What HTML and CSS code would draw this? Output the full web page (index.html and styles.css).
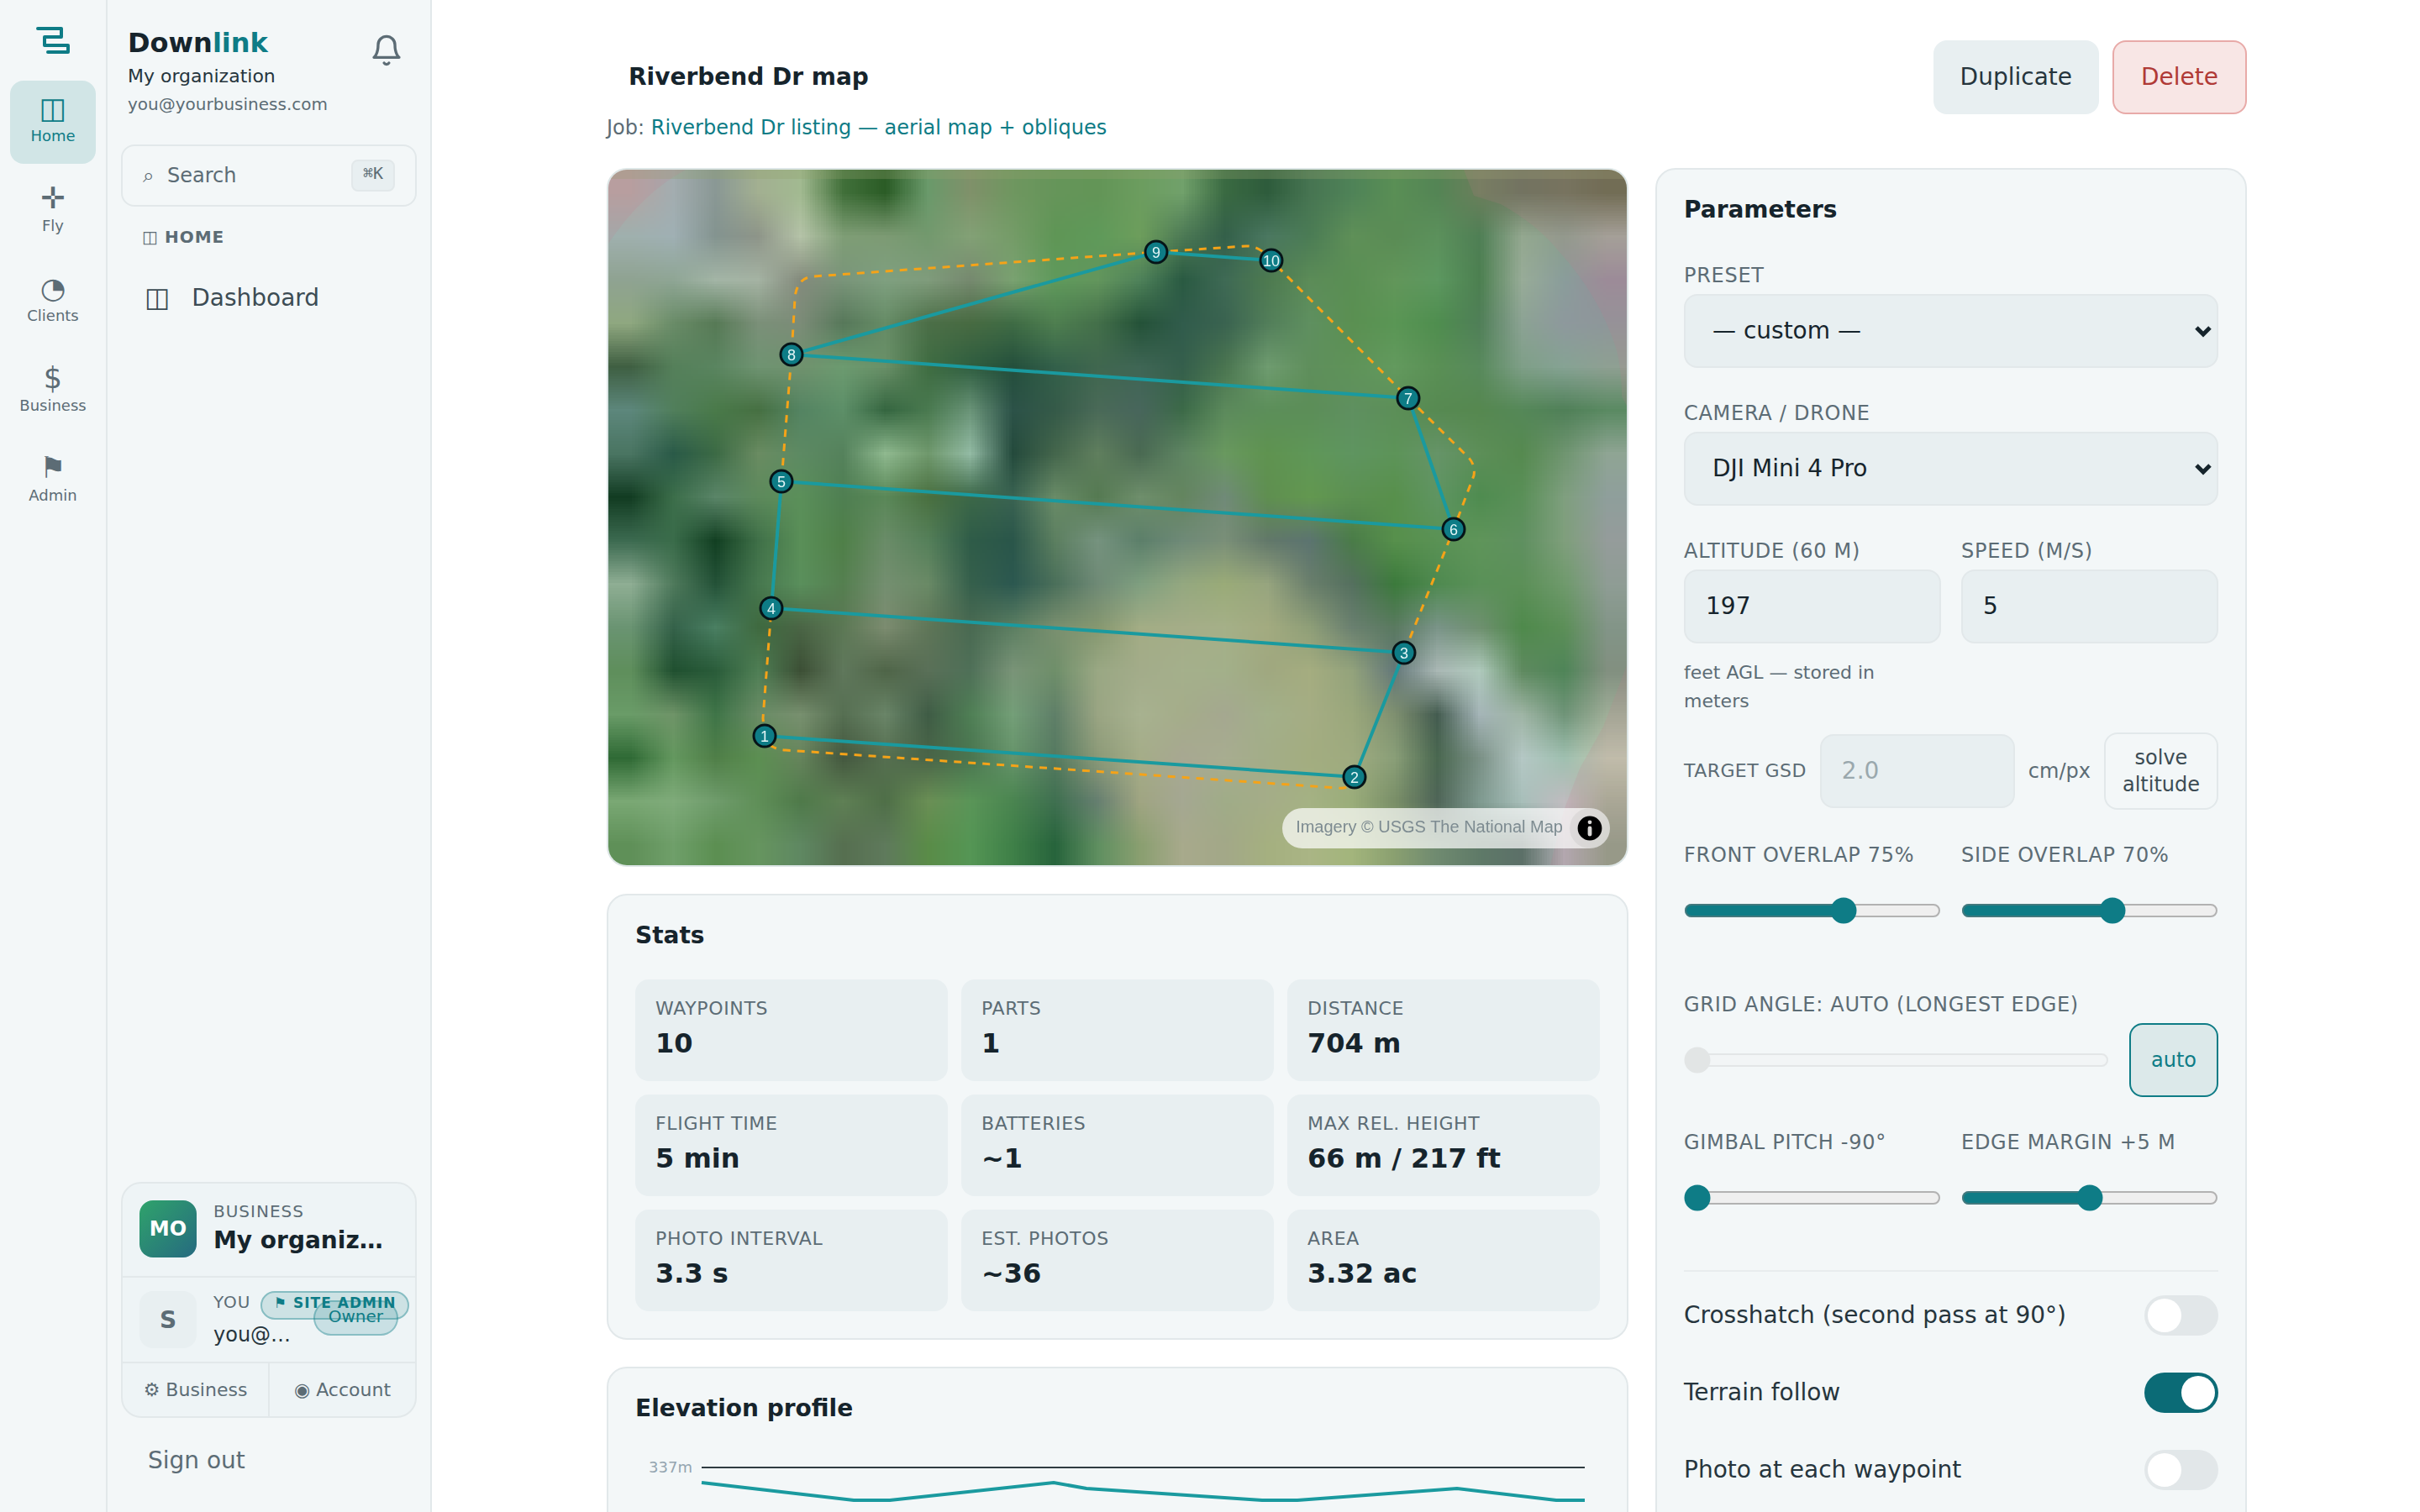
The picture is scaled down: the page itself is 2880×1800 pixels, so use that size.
FILE: index.html
```html
<!DOCTYPE html>
<html lang="en">
<head>
    <meta charset="UTF-8">
    <meta name="viewport" content="width=device-width, initial-scale=1.0">
    <title>Riverbend Dr map - Downlink</title>
    <link rel="stylesheet" href="styles.css">
</head>
<body>

    <nav class="rail">
        <a href="#" class="rail-logo" aria-label="Downlink">
            <svg width="40" height="32" viewBox="0 0 40 32" fill="none" stroke="currentColor" stroke-width="4" stroke-linecap="round" stroke-linejoin="round">
                <path d="M2 2H30V12H10V22H38V30H14"/>
            </svg>
        </a>
        <a href="#" class="rail-item active"><span class="rail-icon">◫</span>Home</a>
        <a href="#" class="rail-item"><span class="rail-icon">✛</span>Fly</a>
        <a href="#" class="rail-item"><span class="rail-icon">◔</span>Clients</a>
        <a href="#" class="rail-item"><span class="rail-icon">$</span>Business</a>
        <a href="#" class="rail-item"><span class="rail-icon">⚑</span>Admin</a>
    </nav>

    <aside class="sidebar">
        <div class="brand">
            <div>
                <div class="brand-name">Down<span>link</span></div>
                <div class="brand-org">My organization</div>
                <div class="brand-email">you@yourbusiness.com</div>
            </div>
            <button class="bell" aria-label="Notifications">
                <svg width="40" height="40" viewBox="0 0 24 24" fill="none" stroke="currentColor" stroke-width="2" stroke-linecap="round" stroke-linejoin="round">
                    <path d="M18 8A6 6 0 0 0 6 8c0 7-3 9-3 9h18s-3-2-3-9"/>
                    <path d="M13.73 21a2 2 0 0 1-3.46 0"/>
                </svg>
            </button>
        </div>

        <button class="search"><span class="search-icon">⌕</span>Search<kbd>⌘K</kbd></button>

        <div class="section-title"><span>◫</span>HOME</div>
        <a href="#" class="side-link"><span>◫</span>Dashboard</a>

        <div class="account">
            <div class="account-row">
                <div class="avatar avatar-org">MO</div>
                <div class="account-text">
                    <div class="account-label">BUSINESS</div>
                    <div class="account-org">My organiz…</div>
                </div>
            </div>
            <div class="account-row account-you">
                <div class="avatar">S</div>
                <div class="account-text">
                    <div class="account-label">YOU <span class="badge">⚑ SITE ADMIN</span></div>
                    <div class="account-email">you@…</div>
                </div>
                <span class="role">Owner</span>
            </div>
            <div class="account-links">
                <a href="#">⚙ Business</a>
                <a href="#">◉ Account</a>
            </div>
        </div>
        <button class="signout">Sign out</button>
    </aside>

    <main>
        <div class="container">
            <header>
                <input type="text" class="title-input" aria-label="Map name" value="Riverbend Dr map">
                <button class="btn">Duplicate</button>
                <button class="btn btn-danger">Delete</button>
            </header>
            <p class="job">Job: <a href="#">Riverbend Dr listing — aerial map + obliques</a></p>

            <div class="columns">
                <div class="column">
                    <div class="map">
                        <canvas id="imagery" class="map-layer"></canvas>
                        <svg class="map-layer" viewBox="0 0 1212 828" preserveAspectRatio="xMidYMid slice">
                            <rect width="1212" height="11" fill="#93a36e" opacity="0.3"/>
                            <!-- outside of the flight radius -->
                            <g fill="#c8788c" opacity="0.15">
                                <path d="M0 0H92Q40 28 0 88Z"/>
                                <path d="M1018 0L1030 31L1062 41Q1105 65 1130 96Q1180 150 1200 215Q1206 240 1206 270L1212 281V0Z"/>
                                <path d="M1212 590L1184 663L1156 713L1137 763L1121 828H1212Z"/>
                            </g>
                            <path class="boundary" d="M186 674L184 653L194 522L206 371L218 220L222 153Q224 128 245 127L652 98L759 91Q775 90 789 108L952 272L1024 343Q1032 352 1030 364L1006 428L947 575L888 723Q886 738 868 736L211 691Q190 690 186 674"/>
                            <path class="route" d="M186 674L888 723L947 575L194 522L206 371L1006 428L952 272L218 220L652 98L789 108"/>
                            <g class="points" id="points"></g>
                        </svg>
                        <div class="attribution">
                            <span>Imagery © USGS The National Map</span>
                            <button aria-label="Toggle attribution">
                                <svg width="48" height="48" viewBox="0 0 20 20" fill-rule="evenodd"><path d="M4 10a6 6 0 1 0 12 0 6 6 0 1 0-12 0m5-3a1 1 0 1 0 2 0 1 1 0 1 0-2 0m0 3a1 1 0 1 1 2 0v3a1 1 0 1 1-2 0"/></svg>
                            </button>
                        </div>
                    </div>

                    <section class="card">
                        <h2>Stats</h2>
                        <div class="stats">
                            <div class="stat"><span>WAYPOINTS</span><strong>10</strong></div>
                            <div class="stat"><span>PARTS</span><strong>1</strong></div>
                            <div class="stat"><span>DISTANCE</span><strong>704 m</strong></div>
                            <div class="stat"><span>FLIGHT TIME</span><strong>5 min</strong></div>
                            <div class="stat"><span>BATTERIES</span><strong>~1</strong></div>
                            <div class="stat"><span>MAX REL. HEIGHT</span><strong>66 m / 217 ft</strong></div>
                            <div class="stat"><span>PHOTO INTERVAL</span><strong>3.3 s</strong></div>
                            <div class="stat"><span>EST. PHOTOS</span><strong>~36</strong></div>
                            <div class="stat"><span>AREA</span><strong>3.32 ac</strong></div>
                        </div>
                    </section>

                    <section class="card">
                        <h2>Elevation profile</h2>
                        <svg class="chart" viewBox="0 0 1148 280">
                            <text x="68" y="24" text-anchor="end">337m</text>
                            <path d="M79 18H1130" stroke="#2f3c42" stroke-width="2"/>
                            <path d="M79 36L260 57H303L498 36L537 43L746 57H788L978 43L1096 57H1130" stroke="#1a9a9f" stroke-width="4"/>
                        </svg>
                    </section>
                </div>

                <section class="card params">
                    <h2>Parameters</h2>

                    <div class="field">
                        <label for="preset">PRESET</label>
                        <div class="select">
                            <select id="preset"><option>— custom —</option></select>
                            <svg width="20" height="14" viewBox="0 0 20 14" fill="none" stroke="currentColor" stroke-width="5"><path d="M2 2L10 10L18 2"/></svg>
                        </div>
                    </div>
                    <div class="field">
                        <label for="camera">CAMERA / DRONE</label>
                        <div class="select">
                            <select id="camera"><option>DJI Mini 4 Pro</option></select>
                            <svg width="20" height="14" viewBox="0 0 20 14" fill="none" stroke="currentColor" stroke-width="5"><path d="M2 2L10 10L18 2"/></svg>
                        </div>
                    </div>

                    <div class="pair">
                        <div>
                            <label for="altitude">ALTITUDE (60 M)</label>
                            <input type="text" id="altitude" value="197">
                            <p class="hint">feet AGL — stored in meters</p>
                        </div>
                        <div>
                            <label for="speed">SPEED (M/S)</label>
                            <input type="text" id="speed" value="5">
                        </div>
                    </div>

                    <div class="gsd field">
                        <label for="gsd">TARGET GSD</label>
                        <input type="text" id="gsd" placeholder="2.0">
                        <span>cm/px</span>
                        <button>solve altitude</button>
                    </div>

                    <div class="pair field">
                        <div>
                            <label for="front">FRONT OVERLAP 75%</label>
                            <div class="slider"><input type="range" id="front" min="40" max="95" value="75"></div>
                        </div>
                        <div>
                            <label for="side">SIDE OVERLAP 70%</label>
                            <div class="slider"><input type="range" id="side" min="40" max="90" value="70"></div>
                        </div>
                    </div>

                    <div class="field angle">
                        <label for="angle">GRID ANGLE: AUTO (LONGEST EDGE)</label>
                        <div class="angle-row">
                            <div class="slider"><input type="range" id="angle" min="0" max="180" value="0" disabled></div>
                            <button class="auto">auto</button>
                        </div>
                    </div>

                    <div class="pair">
                        <div>
                            <label for="pitch">GIMBAL PITCH -90°</label>
                            <div class="slider"><input type="range" id="pitch" min="-90" max="0" value="-90"></div>
                        </div>
                        <div>
                            <label for="margin">EDGE MARGIN +5 M</label>
                            <div class="slider"><input type="range" id="margin" min="-20" max="30" value="5"></div>
                        </div>
                    </div>

                    <div class="toggles">
                        <div class="toggle"><label for="crosshatch">Crosshatch (second pass at 90°)</label><input type="checkbox" id="crosshatch"></div>
                        <div class="toggle"><label for="terrain">Terrain follow</label><input type="checkbox" id="terrain" checked></div>
                        <div class="toggle"><label for="photo">Photo at each waypoint</label><input type="checkbox" id="photo"></div>
                    </div>
                </section>
            </div>
        </div>
    </main>

    <script src="map.js"></script>
</body>
</html>
```

FILE: styles.css
```css
* {
    box-sizing: border-box;
}
body {
    margin: 0;
    height: 100vh;
    overflow: hidden;
    display: flex;
    font-family: "DejaVu Sans", sans-serif;
    font-size: 28px;
    color: #26353d;
    background-color: #ffffff;
}
a {
    color: inherit;
    text-decoration: none;
}
button, input, select {
    font-family: inherit;
    color: inherit;
}
button {
    cursor: pointer;
}
p, h2 {
    margin: 0;
}

/* Icon rail */
.rail {
    width: 128px;
    flex-shrink: 0;
    padding: 32px 12px;
    background-color: #f3f7f8;
    border-right: 2px solid #e2e8ea;
    display: flex;
    flex-direction: column;
    gap: 8px;
}
.rail-logo {
    height: 56px;
    display: flex;
    justify-content: center;
    color: #0e7c86;
}
.rail-logo svg {
    display: block;
}
.rail-item {
    height: 99px;
    padding-top: 12px;
    border-radius: 16px;
    display: flex;
    flex-direction: column;
    align-items: center;
    font-size: 18px;
    line-height: 24px;
    color: #5c6c75;
}
.rail-item.active {
    background-color: #d1e5e6;
    color: #0e7c86;
}
.rail-icon {
    font-size: 35px;
    line-height: 42px;
    height: 42px;
}

/* Sidebar */
.sidebar {
    width: 386px;
    flex-shrink: 0;
    padding: 30px 16px 18px;
    background-color: #f3f7f8;
    border-right: 2px solid #e2e8ea;
    display: flex;
    flex-direction: column;
}
.brand {
    display: flex;
    justify-content: space-between;
    align-items: flex-start;
    padding: 0 16px 0 8px;
    margin-bottom: 34px;
}
.brand-name {
    font-size: 32px;
    font-weight: bold;
    line-height: 42px;
    color: #16242c;
}
.brand-name span {
    color: #0e7c86;
}
.brand-org {
    font-size: 22px;
    line-height: 38px;
}
.brand-email {
    font-size: 20px;
    line-height: 28px;
    color: #5c6c75;
}
.bell {
    margin-top: 10px;
    padding: 0;
    border: none;
    background: none;
    color: #5c6c75;
}
.bell svg {
    display: block;
}
.search {
    height: 74px;
    padding: 0 24px;
    border: 2px solid #e2e8ea;
    border-radius: 16px;
    background: none;
    display: flex;
    align-items: center;
    font-size: 24px;
    color: #5c6c75;
}
.search-icon {
    width: 29px;
    text-align: left;
}
.search kbd {
    margin-left: auto;
    height: 38px;
    padding: 0 12px;
    border: 2px solid #e2e8ea;
    border-radius: 8px;
    background-color: #e8eff1;
    font-family: "DejaVu Sans Mono", monospace;
    font-size: 20px;
    line-height: 28px;
}
.section-title {
    display: flex;
    gap: 7px;
    margin-top: 22px;
    padding-left: 25px;
    font-size: 20px;
    line-height: 28px;
    font-weight: bold;
    letter-spacing: 1px;
    color: #5c6c75;
}
.section-title span {
    font-weight: normal;
}
.side-link {
    display: flex;
    align-items: center;
    gap: 26px;
    height: 88px;
    margin-top: 14px;
    padding-left: 28px;
    color: #3c4c54;
}
.side-link span {
    font-size: 32px;
}

.account {
    margin-top: auto;
    margin-bottom: 6px;
    border: 2px solid #e2e8ea;
    border-radius: 24px;
    background-color: #eef4f6;
}
.account-row {
    height: 112px;
    padding: 20px;
    border-bottom: 2px solid #e2e8ea;
    display: flex;
    gap: 20px;
}
.account-you {
    height: 102px;
    padding: 16px 20px;
    gap: 16px;
}
.account-you .account-text {
    margin-left: 4px;
}
.avatar {
    width: 68px;
    height: 68px;
    flex-shrink: 0;
    border-radius: 16px;
    background-color: #e8eff1;
    color: #5c6c75;
    display: flex;
    align-items: center;
    justify-content: center;
    font-weight: bold;
}
.avatar-org {
    font-size: 24px;
    color: #ffffff;
    background: linear-gradient(135deg, #2fa36b, #266a80);
}
.account-text {
    flex: 1;
    min-width: 0;
}
.account-label {
    font-size: 20px;
    line-height: 26px;
    letter-spacing: 1px;
    white-space: nowrap;
    color: #5c6c75;
}
.account-org {
    white-space: nowrap;
    font-size: 28px;
    line-height: 44px;
    font-weight: bold;
    color: #16242c;
}
.account-email {
    white-space: nowrap;
    font-size: 24px;
    line-height: 36px;
    color: #26353d;
}
.badge {
    display: inline-block;
    height: 34px;
    margin-left: 4px;
    padding: 0 14px;
    border: 2px solid #86bdc2;
    border-radius: 17px;
    background-color: #cde2e4;
    font-size: 17px;
    line-height: 24px;
    font-weight: bold;
    vertical-align: top;
    color: #0e7c86;
}
.role {
    align-self: center;
    height: 42px;
    margin-bottom: 4px;
    padding: 0 16px;
    border: 2px solid rgba(14, 124, 134, 0.35);
    border-radius: 21px;
    background-color: rgba(14, 124, 134, 0.16);
    font-size: 20px;
    line-height: 34px;
    color: #0e7c86;
}
.account-links {
    display: flex;
    font-size: 22px;
    line-height: 63px;
    text-align: center;
    color: #5c6c75;
}
.account-links a {
    flex: 1;
}
.account-links a + a {
    border-left: 2px solid #e2e8ea;
}
.signout {
    height: 88px;
    padding: 0 32px;
    border: none;
    background: none;
    font-size: 28px;
    text-align: left;
    color: #5c6c75;
}

/* Page */
main {
    flex: 1;
    min-width: 0;
    overflow: hidden;
    padding: 48px 64px 48px 66px;
}
.container {
    max-width: 1952px;
    margin: 0 auto;
}
header {
    display: flex;
    gap: 16px;
}
.title-input {
    flex: 1;
    min-width: 0;
    height: 88px;
    padding: 0 24px 2px;
    border: 2px solid transparent;
    background: none;
    font-size: 28px;
    font-weight: bold;
    color: #16242c;
}
.btn {
    height: 88px;
    padding: 0 32px 2px;
    border: none;
    border-radius: 16px;
    background-color: #e8eff1;
    font-size: 28px;
}
.btn-danger {
    border: 2px solid #e8aaa8;
    background-color: #f8e6e5;
    color: #b03a36;
}
.job {
    margin-top: 2px;
    margin-bottom: 34px;
    font-size: 24px;
    line-height: 28px;
    color: #5c6c75;
}
.job a {
    color: #0e7c86;
}
.columns {
    display: grid;
    grid-template-columns: minmax(0, 1fr) 704px;
    align-items: start;
    gap: 32px;
}
.column {
    display: flex;
    flex-direction: column;
    gap: 32px;
    min-width: 0;
}
.card {
    padding: 32px;
    border: 2px solid #e2e8ea;
    border-radius: 24px;
    background-color: #f3f7f8;
}
.card h2 {
    margin-bottom: 36px;
    font-size: 28px;
    line-height: 32px;
    color: #16242c;
}

/* Map */
.map {
    position: relative;
    height: 832px;
    border: 2px solid #dde6e6;
    border-radius: 24px;
    overflow: hidden;
}
.map-layer {
    position: absolute;
    top: 0;
    left: 0;
    width: 100%;
    height: 100%;
}
.boundary {
    fill: none;
    stroke: #f5a318;
    stroke-width: 3;
    stroke-dasharray: 9 8;
}
.route {
    fill: none;
    stroke: #1a9a9f;
    stroke-width: 4;
}
.points circle {
    fill: #0e7c86;
    stroke: #061418;
    stroke-width: 3;
}
.points text {
    font-family: "Liberation Sans", sans-serif;
    font-size: 18px;
    text-anchor: middle;
    fill: #e4f6f7;
}
.attribution {
    position: absolute;
    right: 20px;
    bottom: 20px;
    display: flex;
    gap: 8px;
    padding-left: 16px;
    border-radius: 24px;
    background-color: rgba(255, 255, 255, 0.7);
    font-family: "Liberation Sans", sans-serif;
    font-size: 20px;
    line-height: 44px;
    color: #7d8b91;
}
.attribution button {
    width: 48px;
    height: 48px;
    padding: 0;
    border: none;
    border-radius: 24px;
    background-color: rgba(0, 0, 0, 0.05);
    color: #000000;
}
.attribution svg {
    display: block;
}

/* Stats */
.stats {
    display: grid;
    grid-template-columns: repeat(3, minmax(0, 1fr));
    gap: 16px;
}
.stat {
    padding: 20px 24px 21px;
    border-radius: 16px;
    background-color: #e8eff1;
}
.stat span {
    display: block;
    font-size: 22px;
    line-height: 30px;
    letter-spacing: 0.03em;
    color: #5c6c75;
}
.stat strong {
    display: block;
    margin-top: 2px;
    font-size: 32px;
    line-height: 48px;
    color: #16242c;
}
.chart {
    display: block;
    width: 100%;
    fill: none;
}
.chart text {
    font-size: 18px;
    fill: #94a5b0;
}

/* Parameters */
.params h2 {
    margin-bottom: 44px;
}
.params label {
    display: block;
    font-size: 24px;
    line-height: 36px;
    letter-spacing: 0.03em;
    color: #5c6c75;
}
.field {
    margin-bottom: 36px;
}
.pair {
    display: grid;
    grid-template-columns: 1fr 1fr;
    gap: 24px;
}
.params input[type="text"], .params select {
    display: block;
    width: 100%;
    height: 88px;
    margin-top: 4px;
    padding: 0 24px 2px;
    border: 2px solid #e2e8ea;
    border-radius: 16px;
    background-color: #e8eff1;
    font-size: 28px;
    color: #16242c;
}
.params select {
    appearance: none;
    padding: 0 32px 2px;
}
.params input::placeholder {
    color: #9aa8ad;
}
.select {
    position: relative;
    color: #16242c;
}
.select svg {
    position: absolute;
    right: 8px;
    top: 38px;
    pointer-events: none;
}
.hint {
    margin-top: 18px;
    margin-bottom: 20px;
    font-size: 22px;
    line-height: 34px;
    color: #5c6c75;
}
.gsd {
    display: flex;
    align-items: center;
    gap: 16px;
    font-size: 24px;
    color: #5c6c75;
}
.params .gsd label {
    flex-shrink: 0;
    font-size: 22px;
    letter-spacing: 0.02em;
}
.params .gsd input {
    flex: 1;
    min-width: 0;
    margin-top: 0;
}
.gsd button {
    width: min-content;
    height: 92px;
    padding: 0 20px;
    border: 2px solid #e2e8ea;
    border-radius: 16px;
    background: none;
    font-size: 24px;
    line-height: 32px;
    color: #3c4c54;
}
.slider {
    flex: 1;
    height: 88px;
    margin-top: 4px;
    display: flex;
    align-items: center;
}
.slider input {
    zoom: 2;
    width: 100%;
    margin: 0;
    accent-color: #0e7c86;
}
.slider input:disabled {
    opacity: 0.4;
}
.angle {
    margin-top: 50px;
}
.angle-row {
    display: flex;
    align-items: center;
    gap: 24px;
}
.angle-row .auto {
    height: 88px;
    margin-top: 4px;
    padding: 0 24px;
    border: 2px solid #0e7c86;
    border-radius: 16px;
    background-color: #dce9ea;
    font-size: 24px;
    color: #0e7c86;
}
.toggles {
    margin-top: 42px;
    padding-top: 6px;
    border-top: 2px solid #e8ecee;
}
.toggle {
    display: flex;
    align-items: center;
    justify-content: space-between;
    height: 92px;
}
.toggle label {
    font-size: 28px;
    letter-spacing: normal;
    color: #26353d;
}
.toggle input {
    appearance: none;
    width: 88px;
    height: 48px;
    margin: 0;
    padding: 4px;
    border-radius: 24px;
    background-color: #e2e7e9;
    display: flex;
}
.toggle input::before {
    content: "";
    width: 40px;
    height: 40px;
    border-radius: 50%;
    background-color: #ffffff;
}
.toggle input:checked {
    justify-content: flex-end;
    background-color: #0b6b76;
}
```

FILE: map.js
```js
// low resolution imagery, one colour per cell
const imagery = [
    'b5a5a3 a3adb0 8a9895 a3b091 a2ba91 41703a 2b5c26 6a9a6b 80916a 6f9760 66955a 639557 6c9d5f 71a16b 3a6a42 2e5c3c 477552 4f8358 5a8f55 548555 6b7f5c 64735a 6a7358 636b4c',
    '9fb0ae a0b0b4 849490 8e9589 b5c3a8 7f9e76 7d9b74 73996e 83a176 759c68 5f9656 5f9a5a 6d9e5c 4d7a55 34604a 4b7861 4b7c55 5f9058 5a8c55 5c915c 4f7f55 94a890 8a9f8e 9fa79a',
    '8fa392 8fa695 a3b5a6 a5b3a3 848b7d 7a957a 7fa080 809c7c 76896f 7aa271 5f9a5c 63965d 4f825a 2a5a42 3f6a55 4d7a50 5c8c58 5a8f54 62965a 5d9860 4c8050 98ac98 8a9d9b 958f9a',
    '8fa880 6a8c68 577a56 7b9079 7c8c78 57785a 668c66 4c6f48 486b42 3f6c45 4f7f50 44704a 245238 315c4c 3a6350 527e5a 5f9060 5b9052 5a9655 4f8e4f 507f58 8ca394 8e999d 8e979a',
    '3f5f42 55805a 5a8560 6f9472 70926e 6c9b70 6a9068 3f6d42 2f5e40 244f3c 33604a 40674f 3f6655 355f4c 4a7550 6f9c70 5f8f5c 5f9359 639a5e 5a9055 588a5c 7f9f88 86a394 8fa093',
    '5d877c 517f5c 4a7a4a 467042 548462 5d8f68 356640 4a7a50 6a9478 2c5248 355a48 4a6a58 48665c 3c6a48 5c8a5c 5c8f5a 5c8e58 5f9060 5c8f58 578a52 568850 558858 508058 5a8a62',
    '4a7562 2a5a48 3c6a45 6a8c62 5d8a63 55825c 8fb98f 6f986c 93bba4 244a3c 44664c 607f5e 4a6a52 5f8563 69995f 5f9350 5f9758 5f9560 5d9459 669468 5d8f58 568a50 6f9570 8fa594',
    '123c22 3c6e4a 5a8568 5d8a5c 5b905a 4f7f52 5a8858 4a7040 3c6848 3a6352 6a8c68 557a52 6f8f6c 64855f 708a78 5f8f50 639850 5c9052 58904c 5f9562 4f8c50 5a9058 7f9f7f 8f9f9c',
    '3c6a50 3a6c4a 123f22 3f7048 5a8f58 4f8048 6a8c68 55805a 2f5c48 2a564a 5c7f60 76937f 5c7f6a 6f8a78 7a8f78 62786a 5c7470 4a7c48 57904c 5a9255 5f955a 5f9060 7f9f7c 959c9b',
    '8fae94 4f7a5c 245238 47784f 5a8f5c 557f50 748f70 6a8a66 36604c 2c5850 4a6f5a 6f8a76 7f9f80 94a880 9aab78 97a57f 6a7f6c 55705f 3c7a3c 4f8a50 5a9158 5c9058 6f9a6c 8f9d95',
    '6a9472 35624a 4a7f62 3f6a40 4a6545 5c7855 7c8c70 5f7658 4a6a52 5c7f62 7a9070 869870 a3ad85 a5ad88 a5b088 a3ab80 8f9f78 6a8070 5a7a60 7a9488 6f9070 4f8a4c 5c8f58 839588',
    '5f8f5c 205030 2a5c3a 4f7f55 3c4f35 60785c 4f6548 5a7058 4f7058 7a9478 6f8f6a 9aa884 a3ac8a a5b08c a3b08a a0a880 a5ad80 93a37c 64787a aab8b5 b0cabd 5f8a60 4f8558 829080',
    '6a9c68 6f9468 3f7548 6a8c66 78906f 566f52 6a8568 3f5c45 4f7f55 749f78 5f7f68 9aa583 a8b290 a5ad8a a5a890 a3b08a a5ad84 9ba87c 7f9070 445c50 a5b5b8 9fb5a5 6f9478 9fae98',
    '2f6a35 64985f 507f48 5c8f52 66845c 44583f 566f50 4a6548 4a7550 66946a 557a60 8c9a78 a5ad88 a8a892 a8ad90 a3ad88 a3ad80 9fab80 8a9f78 4a6850 7a9085 b5c8c5 9fc0b0 c0c8b0',
    '7aa874 7fab7a 6f9c6c 5f8f58 4f7a4a 5f8055 4f6f48 6a8f55 5a9558 4a8550 3f7050 667f70 a0a582 a5a892 a0ac88 a5ad88 a5b284 9aad7a 7a8f68 4f6558 7f9a90 a8bfba c0bcc0 a5b098',
    '5f9058 6f9f6a 5c8f52 66955f 5f8862 566f50 5f7a5c 5a8c48 559655 3f8048 27643c 5f8f60 8a9f70 a8aa8c a3a888 a5b080 aab585 a3b57c 8aa070 6f8a70 5f7a68 5c7068 b0b0b5 8f9f88'
];

const canvas = document.getElementById('imagery');
canvas.width = 24;
canvas.height = imagery.length;
const ctx = canvas.getContext('2d');
imagery.forEach((row, y) => {
    row.split(' ').forEach((color, x) => {
        ctx.fillStyle = '#' + color;
        ctx.fillRect(x, y, 1, 1);
    });
});

// waypoints in flight order
const waypoints = [
    [186, 674], [888, 723], [947, 575], [194, 522], [206, 371],
    [1006, 428], [952, 272], [218, 220], [652, 98], [789, 108]
];
document.getElementById('points').innerHTML = waypoints.map(([x, y], i) =>
    `<circle cx="${x}" cy="${y}" r="13"/><text x="${x}" y="${y + 7}">${i + 1}</text>`
).join('');
```
